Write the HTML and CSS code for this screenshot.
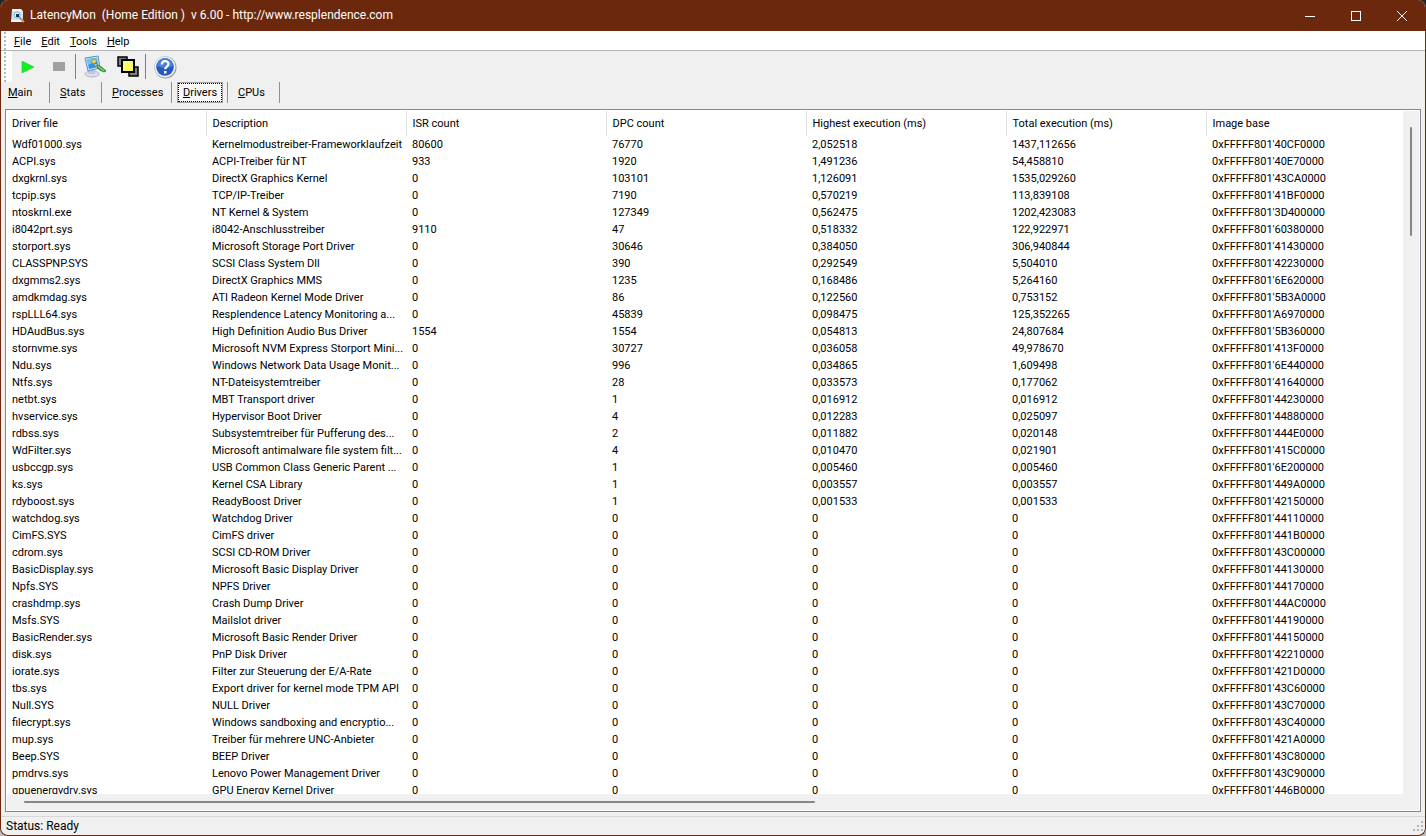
FILE: index.html
```html
<!DOCTYPE html>
<html lang="en">
<head>
    <meta charset="UTF-8">
    <meta name="viewport" content="width=device-width, initial-scale=1.0">
    <title>LatencyMon</title>
    <link rel="stylesheet" href="styles.css">
</head>
<body>
    <div class="window">
        <header class="titlebar">
            <svg class="app-icon" width="16" height="16" viewBox="0 0 16 16">
                <path d="M2 1h9l2 2v11H1z" fill="#cfe6f7"/>
                <path d="M2 1h9v2H2z" fill="#f4faff"/>
                <path d="M1 12h12v2H1z" fill="#eef6fc"/>
                <circle cx="7" cy="7" r="3" fill="#e9f7ff" stroke="#7fb4cd"/>
                <rect x="6" y="6" width="3" height="3" fill="#16384e"/>
                <path d="M9 9l5 5" stroke="#b98d78" stroke-width="2"/>
            </svg>
            <h1 class="title">LatencyMon&nbsp; (Home Edition )&nbsp; v 6.00 - http://www.resplendence.com</h1>
            <div class="window-buttons">
                <button type="button" aria-label="Minimize"><svg width="10" height="10"><path d="M0 5.5h10"/></svg></button>
                <button type="button" aria-label="Maximize"><svg width="10" height="10"><rect x="0.5" y="0.5" width="9" height="9"/></svg></button>
                <button type="button" aria-label="Close"><svg width="10" height="10"><path d="M0 0l10 10M10 0L0 10"/></svg></button>
            </div>
        </header>

        <nav class="menubar">
            <span class="grip"></span>
            <a href="#"><u>F</u>ile</a>
            <a href="#"><u>E</u>dit</a>
            <a href="#"><u>T</u>ools</a>
            <a href="#"><u>H</u>elp</a>
        </nav>

        <div class="toolbar">
            <span class="grip"></span>
            <button type="button" class="tool tool-small" aria-label="Start">
                <svg width="14" height="12" viewBox="0 0 14 12"><path d="M1 0l12 6-12 6z" fill="#0bf51d" stroke="#39b34a" stroke-width="0.6"/></svg>
            </button>
            <button type="button" class="tool tool-small" aria-label="Stop">
                <svg width="12" height="9"><rect width="12" height="9" fill="#a0a0a0"/></svg>
            </button>
            <span class="divider"></span>
            <button type="button" class="tool tool-options" aria-label="Options">
                <svg width="24" height="24" viewBox="0 0 24 24">
                    <ellipse cx="9" cy="19" rx="7" ry="3" fill="#dcdfee" stroke="#a3a8c2" stroke-width="0.8"/>
                    <path d="M6 14l6 1v4H5z" fill="#c2c7dc"/>
                    <path d="M2 3l13-2 2 12-12 3z" fill="#c5e4f8" stroke="#5b90c5"/>
                    <path d="M4 4l10-1 1 9-9 2z" fill="#2e93e6"/>
                    <path d="M4 4l10-1v3L5 10z" fill="#74c3f6"/>
                    <path d="M8 7l3-3 3 2-3 3z" fill="#f3d04c" stroke="#9c7c20" stroke-width="0.6"/>
                    <path d="M11 9l3 .5 2 2.500-2 .5z" fill="#f1c387"/>
                    <path d="M14 10q3 0 9 6l-2 1q-6-2-7-5z" fill="#44b545" stroke="#23722b" stroke-width="0.8"/>
                    <path d="M15 11l6 5" stroke="#a5e49c" stroke-width="0.8"/>
                </svg>
            </button>
            <button type="button" class="tool" aria-label="Windows">
                <svg width="24" height="24" viewBox="0 0 24 24">
                    <g stroke="#000" stroke-width="1.500">
                        <rect x="2" y="2" width="9" height="9" fill="#808080"/>
                        <rect x="13" y="12" width="9" height="9" fill="#808080"/>
                        <rect x="6" y="5" width="12" height="12" fill="#fffb58" stroke-width="2"/>
                    </g>
                    <path d="M8 7h1v1H8zm4 0h1v1h-1zm3 1h1v1h-1zm-5 2h1v1h-1zm4 1h1v1h-1zm-6 2h1v1H8zm4 1h1v1h-1zm3-1h1v1h-1z" fill="#fffed0"/>
                </svg>
            </button>
            <span class="divider"></span>
            <button type="button" class="tool tool-help" aria-label="Help">
                <svg width="24" height="24" viewBox="0 0 24 24">
                    <circle cx="12.500" cy="12.500" r="11" fill="#999"/>
                    <circle cx="12" cy="12" r="10.500" fill="#f7f9fd" stroke="#b8bfcc" stroke-width="0.6"/>
                    <circle cx="12" cy="12" r="8.800" fill="#2459bd"/>
                    <path d="M4 11a8 8 0 0 1 16 0q-8 4-16 0z" fill="#4b80d8"/>
                    <path d="M8.800 9.500c0-4.500 6.700-4.300 6.700-.4 0 2.500-3.300 2.500-3.300 5.100" fill="none" stroke="#fff" stroke-width="2.200"/>
                    <rect x="11" y="16" width="2.500" height="2.500" fill="#fff"/>
                </svg>
            </button>
        </div>

        <div class="tabs">
            <button type="button" class="tab tab-main"><span><u>M</u>ain</span></button>
            <button type="button" class="tab tab-stats"><span><u>S</u>tats</span></button>
            <button type="button" class="tab tab-processes"><span><u>P</u>rocesses</span></button>
            <button type="button" class="tab tab-drivers active"><span><u>D</u>rivers</span></button>
            <button type="button" class="tab tab-cpus"><span><u>C</u>PUs</span></button>
        </div>

        <main class="list">
            <div class="list-view">
                <table>
                    <thead>
                        <tr><th>Driver file</th><th>Description</th><th>ISR count</th><th>DPC count</th><th>Highest execution (ms)</th><th>Total execution (ms)</th><th>Image base</th></tr>
                    </thead>
                    <tbody>
                        <tr><td>Wdf01000.sys</td><td>Kernelmodustreiber-Frameworklaufzeit</td><td>80600</td><td>76770</td><td>2,052518</td><td>1437,112656</td><td>0xFFFFF801'40CF0000</td></tr>
                        <tr><td>ACPI.sys</td><td>ACPI-Treiber für NT</td><td>933</td><td>1920</td><td>1,491236</td><td>54,458810</td><td>0xFFFFF801'40E70000</td></tr>
                        <tr><td>dxgkrnl.sys</td><td>DirectX Graphics Kernel</td><td>0</td><td>103101</td><td>1,126091</td><td>1535,029260</td><td>0xFFFFF801'43CA0000</td></tr>
                        <tr><td>tcpip.sys</td><td>TCP/IP-Treiber</td><td>0</td><td>7190</td><td>0,570219</td><td>113,839108</td><td>0xFFFFF801'41BF0000</td></tr>
                        <tr><td>ntoskrnl.exe</td><td>NT Kernel &amp; System</td><td>0</td><td>127349</td><td>0,562475</td><td>1202,423083</td><td>0xFFFFF801'3D400000</td></tr>
                        <tr><td>i8042prt.sys</td><td>i8042-Anschlusstreiber</td><td>9110</td><td>47</td><td>0,518332</td><td>122,922971</td><td>0xFFFFF801'60380000</td></tr>
                        <tr><td>storport.sys</td><td>Microsoft Storage Port Driver</td><td>0</td><td>30646</td><td>0,384050</td><td>306,940844</td><td>0xFFFFF801'41430000</td></tr>
                        <tr><td>CLASSPNP.SYS</td><td>SCSI Class System Dll</td><td>0</td><td>390</td><td>0,292549</td><td>5,504010</td><td>0xFFFFF801'42230000</td></tr>
                        <tr><td>dxgmms2.sys</td><td>DirectX Graphics MMS</td><td>0</td><td>1235</td><td>0,168486</td><td>5,264160</td><td>0xFFFFF801'6E620000</td></tr>
                        <tr><td>amdkmdag.sys</td><td>ATI Radeon Kernel Mode Driver</td><td>0</td><td>86</td><td>0,122560</td><td>0,753152</td><td>0xFFFFF801'5B3A0000</td></tr>
                        <tr><td>rspLLL64.sys</td><td>Resplendence Latency Monitoring a...</td><td>0</td><td>45839</td><td>0,098475</td><td>125,352265</td><td>0xFFFFF801'A6970000</td></tr>
                        <tr><td>HDAudBus.sys</td><td>High Definition Audio Bus Driver</td><td>1554</td><td>1554</td><td>0,054813</td><td>24,807684</td><td>0xFFFFF801'5B360000</td></tr>
                        <tr><td>stornvme.sys</td><td>Microsoft NVM Express Storport Mini...</td><td>0</td><td>30727</td><td>0,036058</td><td>49,978670</td><td>0xFFFFF801'413F0000</td></tr>
                        <tr><td>Ndu.sys</td><td>Windows Network Data Usage Monit...</td><td>0</td><td>996</td><td>0,034865</td><td>1,609498</td><td>0xFFFFF801'6E440000</td></tr>
                        <tr><td>Ntfs.sys</td><td>NT-Dateisystemtreiber</td><td>0</td><td>28</td><td>0,033573</td><td>0,177062</td><td>0xFFFFF801'41640000</td></tr>
                        <tr><td>netbt.sys</td><td>MBT Transport driver</td><td>0</td><td>1</td><td>0,016912</td><td>0,016912</td><td>0xFFFFF801'44230000</td></tr>
                        <tr><td>hvservice.sys</td><td>Hypervisor Boot Driver</td><td>0</td><td>4</td><td>0,012283</td><td>0,025097</td><td>0xFFFFF801'44880000</td></tr>
                        <tr><td>rdbss.sys</td><td>Subsystemtreiber für Pufferung des...</td><td>0</td><td>2</td><td>0,011882</td><td>0,020148</td><td>0xFFFFF801'444E0000</td></tr>
                        <tr><td>WdFilter.sys</td><td>Microsoft antimalware file system filt...</td><td>0</td><td>4</td><td>0,010470</td><td>0,021901</td><td>0xFFFFF801'415C0000</td></tr>
                        <tr><td>usbccgp.sys</td><td>USB Common Class Generic Parent ...</td><td>0</td><td>1</td><td>0,005460</td><td>0,005460</td><td>0xFFFFF801'6E200000</td></tr>
                        <tr><td>ks.sys</td><td>Kernel CSA Library</td><td>0</td><td>1</td><td>0,003557</td><td>0,003557</td><td>0xFFFFF801'449A0000</td></tr>
                        <tr><td>rdyboost.sys</td><td>ReadyBoost Driver</td><td>0</td><td>1</td><td>0,001533</td><td>0,001533</td><td>0xFFFFF801'42150000</td></tr>
                        <tr><td>watchdog.sys</td><td>Watchdog Driver</td><td>0</td><td>0</td><td>0</td><td>0</td><td>0xFFFFF801'44110000</td></tr>
                        <tr><td>CimFS.SYS</td><td>CimFS driver</td><td>0</td><td>0</td><td>0</td><td>0</td><td>0xFFFFF801'441B0000</td></tr>
                        <tr><td>cdrom.sys</td><td>SCSI CD-ROM Driver</td><td>0</td><td>0</td><td>0</td><td>0</td><td>0xFFFFF801'43C00000</td></tr>
                        <tr><td>BasicDisplay.sys</td><td>Microsoft Basic Display Driver</td><td>0</td><td>0</td><td>0</td><td>0</td><td>0xFFFFF801'44130000</td></tr>
                        <tr><td>Npfs.SYS</td><td>NPFS Driver</td><td>0</td><td>0</td><td>0</td><td>0</td><td>0xFFFFF801'44170000</td></tr>
                        <tr><td>crashdmp.sys</td><td>Crash Dump Driver</td><td>0</td><td>0</td><td>0</td><td>0</td><td>0xFFFFF801'44AC0000</td></tr>
                        <tr><td>Msfs.SYS</td><td>Mailslot driver</td><td>0</td><td>0</td><td>0</td><td>0</td><td>0xFFFFF801'44190000</td></tr>
                        <tr><td>BasicRender.sys</td><td>Microsoft Basic Render Driver</td><td>0</td><td>0</td><td>0</td><td>0</td><td>0xFFFFF801'44150000</td></tr>
                        <tr><td>disk.sys</td><td>PnP Disk Driver</td><td>0</td><td>0</td><td>0</td><td>0</td><td>0xFFFFF801'42210000</td></tr>
                        <tr><td>iorate.sys</td><td>Filter zur Steuerung der E/A-Rate</td><td>0</td><td>0</td><td>0</td><td>0</td><td>0xFFFFF801'421D0000</td></tr>
                        <tr><td>tbs.sys</td><td>Export driver for kernel mode TPM API</td><td>0</td><td>0</td><td>0</td><td>0</td><td>0xFFFFF801'43C60000</td></tr>
                        <tr><td>Null.SYS</td><td>NULL Driver</td><td>0</td><td>0</td><td>0</td><td>0</td><td>0xFFFFF801'43C70000</td></tr>
                        <tr><td>filecrypt.sys</td><td>Windows sandboxing and encryptio...</td><td>0</td><td>0</td><td>0</td><td>0</td><td>0xFFFFF801'43C40000</td></tr>
                        <tr><td>mup.sys</td><td>Treiber für mehrere UNC-Anbieter</td><td>0</td><td>0</td><td>0</td><td>0</td><td>0xFFFFF801'421A0000</td></tr>
                        <tr><td>Beep.SYS</td><td>BEEP Driver</td><td>0</td><td>0</td><td>0</td><td>0</td><td>0xFFFFF801'43C80000</td></tr>
                        <tr><td>pmdrvs.sys</td><td>Lenovo Power Management Driver</td><td>0</td><td>0</td><td>0</td><td>0</td><td>0xFFFFF801'43C90000</td></tr>
                        <tr><td>gpuenergydrv.sys</td><td>GPU Energy Kernel Driver</td><td>0</td><td>0</td><td>0</td><td>0</td><td>0xFFFFF801'446B0000</td></tr>
                    </tbody>
                </table>
            </div>
            <div class="scroll-y"><span></span></div>
            <div class="scroll-x"><span></span></div>
        </main>

        <footer class="statusbar">
            <span>Status: Ready</span>
            <svg width="12" height="12" viewBox="0 0 12 12" fill="#b4b4b4">
                <path d="M8 0h2v2H8zM4 4h2v2H4zM8 4h2v2H8zM0 8h2v2H0zM4 8h2v2H4zM8 8h2v2H8z"/>
            </svg>
        </footer>
    </div>
</body>
</html>
```
FILE: styles.css
```css
* {
    box-sizing: border-box;
}

body {
    margin: 0;
    background: linear-gradient(#262626 50%, #c4bcb8 50%);
    font-family: Tahoma, Roboto, sans-serif;
    font-size: 11px;
    line-height: 17px;
    color: #000;
}

button {
    font: inherit;
    color: inherit;
    background: none;
    border: none;
    padding: 0;
}

svg {
    display: block;
}

.window {
    display: flex;
    flex-direction: column;
    height: 100vh;
    border: 1px solid #6b280c;
    border-top: none;
    border-radius: 8px;
    background-color: #f0f0f0;
    overflow: hidden;
}

/* title bar */
.titlebar {
    display: flex;
    align-items: center;
    height: 31px;
    flex-shrink: 0;
    padding-left: 9px;
    background-color: #6b280c;
    color: #fff;
}

.title {
    flex: 1;
    margin: 0 0 0 4px;
    font-size: 12px;
    font-weight: normal;
}

.window-buttons {
    display: flex;
}

.window-buttons button {
    display: flex;
    align-items: center;
    justify-content: center;
    width: 46px;
    height: 31px;
}

.window-buttons svg {
    fill: none;
    stroke: #fff;
    overflow: visible;
}

/* menu and toolbar */
.grip {
    width: 11px;
    align-self: stretch;
    background: #fff radial-gradient(circle, #b8b8b8 1px, transparent 1px) 2px 0 / 4px 4px repeat-y;
}

.menubar {
    display: flex;
    align-items: center;
    height: 20px;
    flex-shrink: 0;
    background-color: #fff;
    border-bottom: 1px solid #b4b4b4;
}

.menubar a {
    padding-top: 1px;
    margin-left: 2px;
    margin-right: 8px;
    color: #000;
    text-decoration: none;
}

.toolbar {
    display: flex;
    align-items: center;
    height: 31px;
    flex-shrink: 0;
}

.tool {
    display: flex;
    align-items: center;
    justify-content: center;
    width: 33px;
    height: 30px;
}

.tool-small {
    width: 31px;
}

.tool-options {
    width: 35px;
    padding-left: 2px;
}

.tool-help {
    width: 38px;
}

.divider {
    width: 1px;
    height: 25px;
    margin-left: 1px;
    background-color: #808080;
}

/* page tabs */
.tabs {
    display: flex;
    height: 21px;
    flex-shrink: 0;
}

.tab {
    border-right: 1px solid #909090;
    text-align: left;
    padding-left: 10px;
}

.tab-main {
    width: 49px;
    padding-left: 7px;
}

.tab-stats,
.tab-cpus {
    width: 52px;
}

.tab-processes {
    width: 70px;
}

.tab-drivers {
    width: 56px;
    padding: 0 5px 0 6px;
}

.tab.active span {
    display: block;
    text-align: center;
    height: 19px;
    line-height: 18px;
    background-color: #f8f8f8;
    border: 1px dotted #000;
    outline: 1px solid #a0a0a0;
}

/* driver list */
.list {
    display: grid;
    grid-template-columns: 1fr 17px;
    grid-template-rows: 1fr 17px;
    flex: 1;
    min-height: 0;
    margin: 6px 4px 4px;
    border: 1px solid #828790;
    background-color: #f0f0f0;
    box-shadow: inset 0 0 0 1px #fff;
}

.list-view {
    min-width: 0;
    min-height: 0;
    padding-top: 1px;
    overflow: hidden;
    background-color: #fff;
}

table {
    width: 100%;
    table-layout: fixed;
    border-collapse: collapse;
}

th,
td {
    width: 200px;
    height: 17px;
    padding: 0 0 0 6px;
    font-weight: normal;
    text-align: left;
    white-space: nowrap;
    overflow: hidden;
}

th {
    height: 25px;
    border-right: 1px solid #e2e2e2;
}

th:last-child,
td:last-child {
    width: auto;
    border-right: none;
}

.scroll-y {
    padding: 17px 0 0 7px;
}

.scroll-y span {
    display: block;
    width: 2px;
    height: 109px;
    border-radius: 1px;
    background-color: #868686;
}

.scroll-x {
    padding: 7px 0 0 18px;
}

.scroll-x span {
    display: block;
    width: 791px;
    max-width: 100%;
    height: 2px;
    border-radius: 1px;
    background-color: #868686;
}

/* status bar */
.statusbar {
    display: flex;
    justify-content: space-between;
    align-items: center;
    height: 19px;
    flex-shrink: 0;
    padding: 1px 0 0 5px;
    border-top: 1px solid #d7d7d7;
    font-size: 12px;
}
```
